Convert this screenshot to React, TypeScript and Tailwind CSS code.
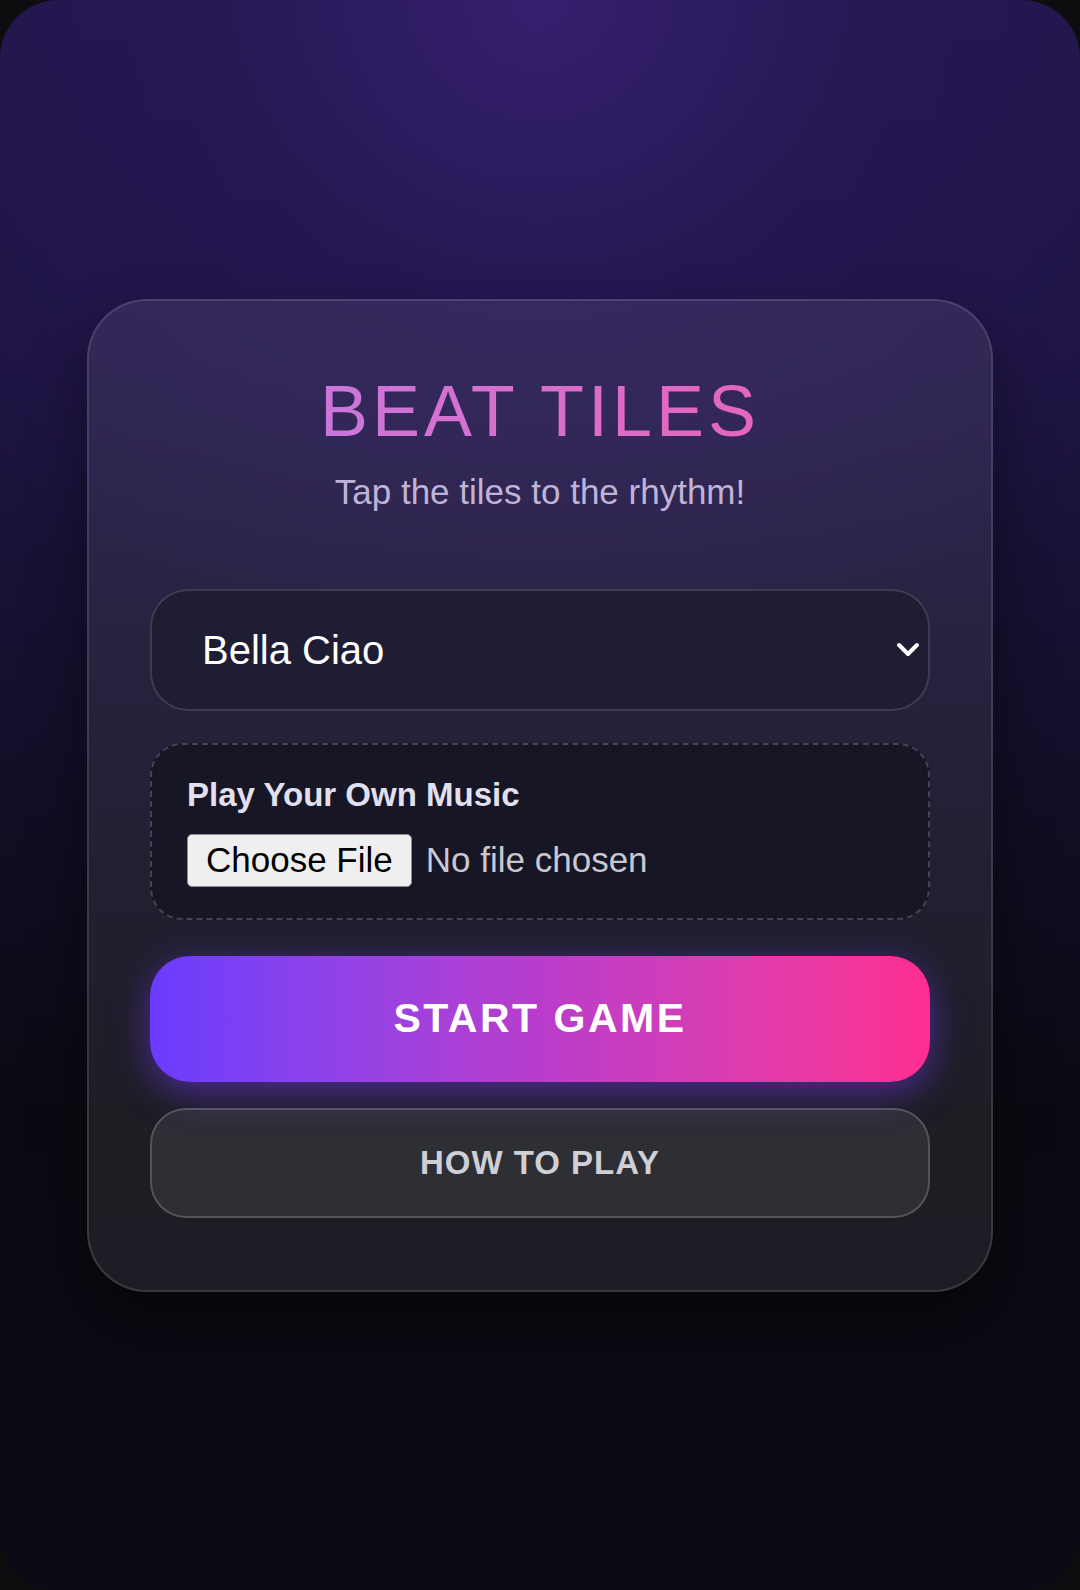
import { useState } from "react"

const songs = ["Bella Ciao", "Fur Elise", "Canon in D", "Moonlight Sonata"]

export default function App() {
    const [song, setSong] = useState(songs[0])
    const [fileName, setFileName] = useState<string | null>(null)

    return (
        <div className="w-[1080px] h-[1590px] bg-[#0d0d0f] font-['Liberation_Sans',Arial,sans-serif]">
            <div className="h-full rounded-[58px] overflow-hidden bg-[radial-gradient(ellipse_70%_45%_at_50%_0%,#35206e_0%,rgba(40,24,90,0.6)_45%,rgba(0,0,0,0)_100%),linear-gradient(to_bottom,#221649_0%,#1d1440_25%,#120e26_50%,#0a0a12_70%,#0a0b14_100%)] flex flex-col items-center pt-[299px]">
                {/* Card */}
                <div className="w-[906px] rounded-[60px] border-2 border-white/[0.12] bg-white/[0.08] shadow-[0_30px_60px_rgba(0,0,0,0.45)] px-[61px] pt-[74px] pb-[72px] flex flex-col">
                    <h1 className="text-center text-[72px] leading-none tracking-[4px] font-normal bg-gradient-to-r from-[#c07ae8] to-[#ef5daf] bg-clip-text text-transparent">
                        BEAT TILES
                    </h1>
                    <p className="mt-[27px] text-center text-[35px] leading-none text-[#bfb4d8]">
                        Tap the tiles to the rhythm!
                    </p>

                    {/* Song select */}
                    <div className="relative mt-[80px]">
                        <select
                            value={song}
                            onChange={(e) => setSong(e.target.value)}
                            className="w-full h-[122px] appearance-none rounded-[38px] border-2 border-white/[0.14] bg-[#1e1d34] pl-[50px] pr-16 text-[40px] text-white outline-none"
                        >
                            {songs.map((s) => (
                                <option key={s} value={s}>{s}</option>
                            ))}
                        </select>
                        <svg
                            className="pointer-events-none absolute right-[10px] top-1/2 -translate-y-1/2"
                            width="24"
                            height="16"
                            viewBox="0 0 24 16"
                            fill="none"
                        >
                            <polyline points="3,3 12,12 21,3" stroke="white" strokeWidth="4" strokeLinecap="round" strokeLinejoin="round" />
                        </svg>
                    </div>

                    {/* Upload */}
                    <div className="mt-[32px] h-[177px] rounded-[32px] border-2 border-dashed border-white/[0.2] bg-[#161625] pl-[35px] pt-[33px] flex flex-col">
                        <span className="text-[33px] leading-none font-bold text-[#e2e0ee]">Play Your Own Music</span>
                        <label className="mt-[23px] flex items-center gap-[14px] cursor-pointer">
                            <span className="h-[53px] px-[18px] flex items-center rounded-[5px] border-[1.5px] border-[#8d8d8d] bg-[#efefef] text-[35px] text-black">
                                Choose File
                            </span>
                            <span className="text-[35px] text-[#c9c8d2]">{fileName ?? "No file chosen"}</span>
                            <input
                                type="file"
                                accept="audio/*"
                                className="hidden"
                                onChange={(e) => setFileName(e.target.files?.[0]?.name ?? null)}
                            />
                        </label>
                    </div>

                    <button className="mt-[36px] h-[126px] rounded-[40px] bg-gradient-to-r from-[#6a3bff] via-[#b93ccb] to-[#ff2d90] shadow-[0_10px_36px_rgba(124,58,255,0.5)] text-[41px] font-bold tracking-[2.5px] text-white">
                        START GAME
                    </button>

                    <button className="mt-[26px] h-[110px] rounded-[36px] border-2 border-white/[0.18] bg-white/[0.08] text-[33px] font-bold tracking-[1px] text-[#cfcfd5]">
                        HOW TO PLAY
                    </button>
                </div>
            </div>
        </div>
    )
}
